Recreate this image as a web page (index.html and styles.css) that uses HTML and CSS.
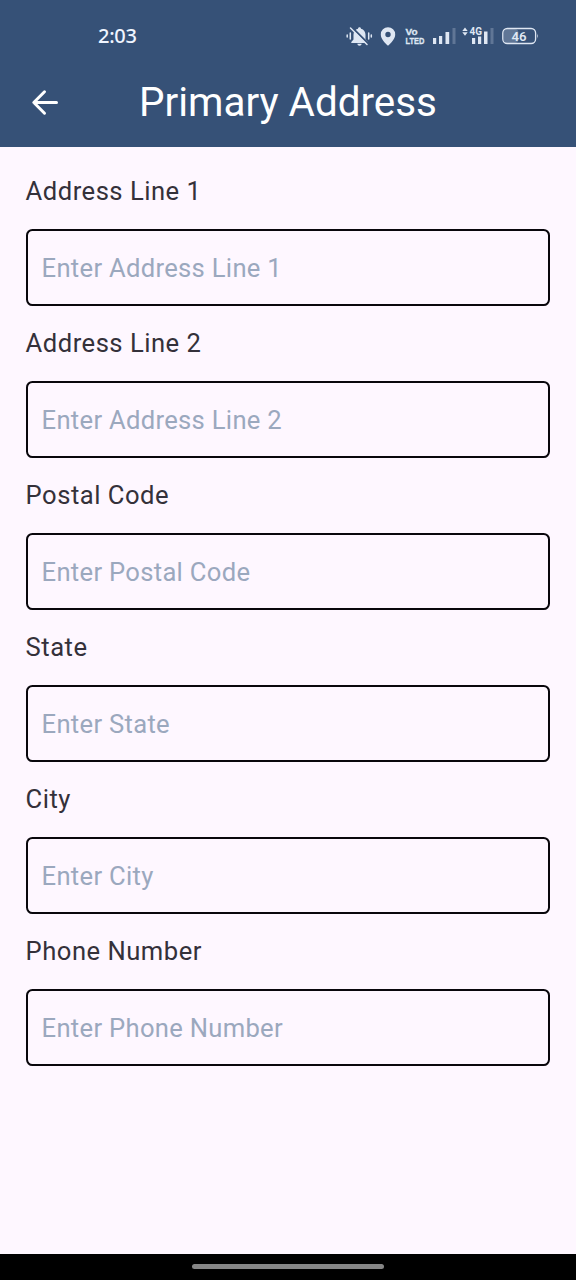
FILE: index.html
```html
<!DOCTYPE html>
<html lang="en">
<head>
<meta charset="utf-8">
<title>Primary Address</title>
<link rel="stylesheet" href="styles.css">
</head>
<body>
<div class="screen">
  <header class="top">
    <div class="status">
      <span class="clock">2:03</span>
      <svg class="status-icons" width="196" height="24" viewBox="344 24 196 24" fill="#dfe7f3">
        <path d="M359.500 27.300c.9 0 1.500.6 1.500 1.500 2.900.8 4.500 3 4.500 6v4.600l2.200 2.500v1h-16.400v-1l2.200-2.500v-4.600c0-3 1.600-5.200 4.500-6 0-.9.6-1.500 1.500-1.500zM357.300 43.700h4.400c-.2 1.300-1 2-2.200 2s-2-.7-2.200-2z"/>
        <path d="M352 27.500l17 17" stroke="#365177" stroke-width="2.200"/>
        <path d="M350.500 28l16.500 16.500" stroke="#dfe7f3" stroke-width="1.500" stroke-linecap="round"/>
        <path d="M347.200 35v2M350.300 33v6M368.700 33v6M371.300 35v2" stroke="#dfe7f3" stroke-width="1.500" stroke-linecap="round"/>
        <path fill-rule="evenodd" d="M388 27.200a7.200 7.200 0 0 1 7.200 7.200c0 4.500-4.200 8.400-7.200 11.300-3-2.900-7.200-6.800-7.200-11.300a7.200 7.200 0 0 1 7.200-7.200zm0 4.600a2.700 2.700 0 1 0 0 5.400 2.700 2.700 0 0 0 0-5.400z"/>
        <text class="net" x="405.500" y="34.800" textLength="12" lengthAdjust="spacingAndGlyphs">Vo</text>
        <text class="net" x="405.500" y="44.200" textLength="19" lengthAdjust="spacingAndGlyphs">LTED</text>
        <path d="M433 38h3.200v6h-3.200zM439 36h3.200v8h-3.200zM445.500 32h3.700v12h-3.700z"/>
        <path d="M452.500 28h3v16h-3zM490.500 28h3v16h-3z" opacity=".25"/>
        <path d="M462.300 31l2.700-3.500 2.700 3.500zM462.300 32.300h5.400l-2.700 3.500z"/>
        <text class="gen" x="469.500" y="35.400" textLength="12.500" lengthAdjust="spacingAndGlyphs">4G</text>
        <path d="M472 38h3.200v6h-3.200zM478 36.500h3.200v7.500h-3.200zM484 31.500h3.500v12.500h-3.500z"/>
        <rect x="503.500" y="29" width="15" height="14" rx="4" opacity=".25"/>
        <rect x="502.800" y="28.500" width="32.800" height="15" rx="4.500" fill="none" stroke="#dfe7f3" stroke-width="1.300"/>
        <path d="M537 33.500q1.500 2.500 0 5z"/>
        <text class="battery" x="511.500" y="40.900" textLength="15" lengthAdjust="spacingAndGlyphs">46</text>
      </svg>
    </div>
    <div class="bar">
      <svg class="back" width="28" height="28" viewBox="0 0 28 28" role="img" aria-label="Back">
        <path d="M25.500 13.500H3M13.500 2.800L2.800 13.500l10.700 10.700" fill="none" stroke="#fff" stroke-width="3" stroke-linecap="round" stroke-linejoin="round"/>
      </svg>
      <h1 class="title">Primary Address</h1>
    </div>
  </header>
  <form class="form">
    <label class="field"><span class="label">Address Line 1</span><input class="input" type="text" placeholder="Enter Address Line 1"></label>
    <label class="field"><span class="label">Address Line 2</span><input class="input" type="text" placeholder="Enter Address Line 2"></label>
    <label class="field"><span class="label">Postal Code</span><input class="input" type="text" placeholder="Enter Postal Code"></label>
    <label class="field"><span class="label">State</span><input class="input" type="text" placeholder="Enter State"></label>
    <label class="field"><span class="label">City</span><input class="input" type="text" placeholder="Enter City"></label>
    <label class="field"><span class="label">Phone Number</span><input class="input" type="text" placeholder="Enter Phone Number"></label>
  </form>
  <footer class="nav"><div class="handle"></div></footer>
</div>
</body>
</html>
```
FILE: styles.css
```css
* { box-sizing: border-box; }
body { margin: 0; font-family: Roboto, sans-serif; background: #fef7ff; }
.screen { width: 576px; height: 1280px; display: flex; flex-direction: column; }
.top { height: 147px; background: #365177; color: #fff; }
.status { height: 72px; padding: 0 36px 0 98px; display: flex; align-items: center; justify-content: space-between; }
.clock { font: 500 20px/24px "Noto Sans", sans-serif; letter-spacing: -0.300px; color: #f0f5ff; }
.net { font: 800 9.500px "Liberation Sans", sans-serif; stroke: #dfe7f3; stroke-width: 0.300px; }
.gen { font: 700 11px Roboto, sans-serif; }
.battery { font: 600 12px Roboto, sans-serif; }
.bar { height: 62px; display: grid; grid-template-columns: 90px 1fr 90px; align-items: center; }
.back { margin-left: 31px; }
.title { margin: 0; font-size: 40.400px; font-weight: 400; line-height: 60px; text-align: center; white-space: nowrap; }
.form { flex: 1; padding: 29px 25.600px 0; display: flex; flex-direction: column; gap: 22px; }
.field { display: flex; flex-direction: column; gap: 23px; }
.label { font-size: 25.600px; line-height: 30px; letter-spacing: 0.5px; color: #34313a; }
.input { height: 77px; width: 100%; padding: 0 14px; border: 2px solid #09070c; border-radius: 6.400px; background: transparent; font: 400 25.600px/36px Roboto, sans-serif; letter-spacing: 0.300px; color: #34313a; outline: none; }
.input::placeholder { color: #9ba8be; opacity: 1; }
.nav { height: 26px; background: #000; padding-top: 10px; }
.handle { width: 192px; height: 5px; margin: 0 auto; border-radius: 3px; background: #858585; }
```
